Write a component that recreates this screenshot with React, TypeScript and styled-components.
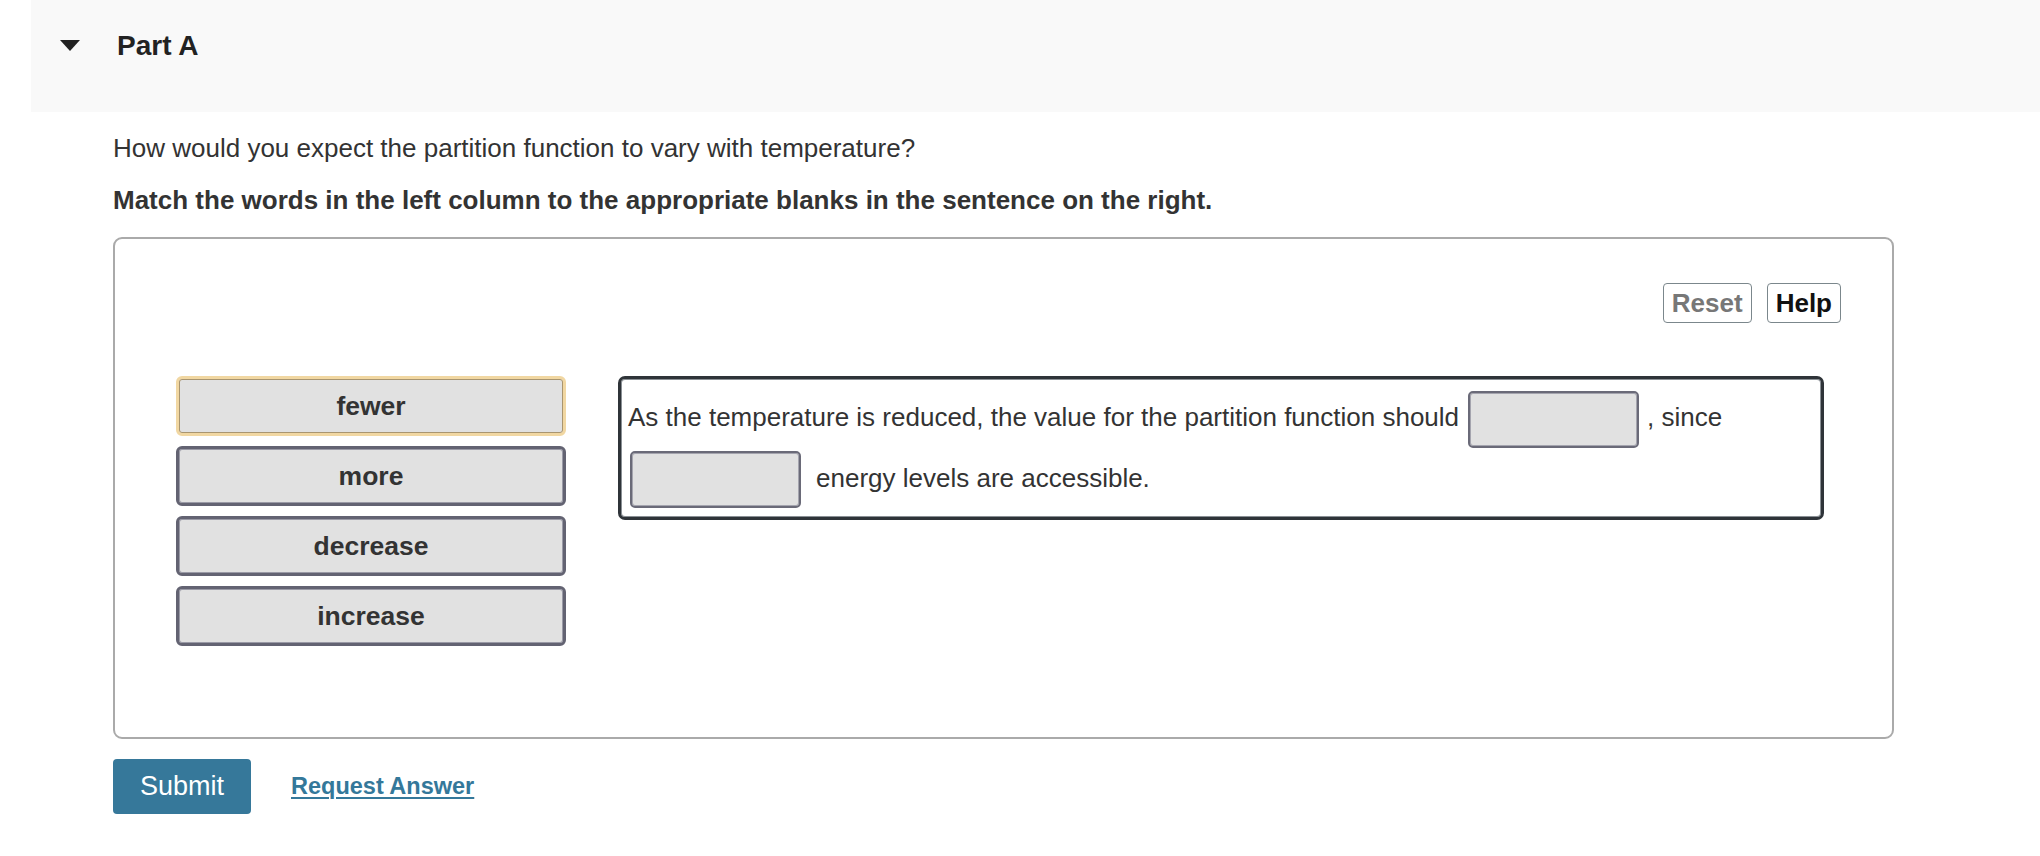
import React from "react";
import styled, { createGlobalStyle } from "styled-components";

const GlobalStyle = createGlobalStyle`
  html, body {
    margin: 0;
    padding: 0;
    background: #ffffff;
  }
  body {
    font-family: "Liberation Sans", Arial, Helvetica, sans-serif;
    color: #333333;
  }
  * { box-sizing: border-box; }
`;

const Page = styled.div`
  padding-left: 31px;
  width: 2040px;
`;

const PartHeader = styled.div`
  height: 112px;
  background: #f9f9f9;
  display: flex;
  align-items: flex-start;
  padding: 29px 0 0 29px;
  gap: 37px;
`;

const Caret = styled.svg`
  width: 20px;
  height: 11px;
  margin-top: 11px;
  flex: none;
`;

const PartTitle = styled.h2`
  margin: 0;
  font-size: 28px;
  line-height: 1.2;
  font-weight: 700;
  color: #222222;
`;

const Content = styled.div`
  margin-left: 82px;
  width: 1781px;
  display: flex;
  flex-direction: column;
`;

const Question = styled.p`
  margin: 20px 0 0;
  font-size: 26px;
  line-height: 32px;
  color: #333333;
`;

const Instruction = styled.p`
  margin: 20px 0 0;
  font-size: 26px;
  line-height: 32px;
  font-weight: 700;
  color: #333333;
`;

const Board = styled.div`
  margin-top: 21px;
  border: 2px solid #aaaaaa;
  border-radius: 9px;
  padding: 44px 51px 91px 61px;
  display: flex;
  flex-direction: column;
`;

const Toolbar = styled.div`
  display: flex;
  justify-content: flex-end;
  gap: 15px;
`;

const ToolButton = styled.button<{ $muted?: boolean }>`
  font-family: "Liberation Sans", Arial, Helvetica, sans-serif;
  font-size: 26px;
  font-weight: 700;
  height: 40px;
  padding: 0 8px;
  background: #ffffff;
  border: 1.5px solid #7b878c;
  border-radius: 4px;
  color: ${(p) => (p.$muted ? "#777777" : "#111111")};
  line-height: 1;
`;

const Workspace = styled.div`
  margin-top: 53px;
  display: flex;
  align-items: flex-start;
  gap: 52px;
`;

const WordColumn = styled.div`
  display: flex;
  flex-direction: column;
  gap: 10px;
  width: 390px;
  flex: none;
`;

const WordTile = styled.div<{ $selected?: boolean }>`
  height: 60px;
  display: flex;
  align-items: center;
  justify-content: center;
  background: #e1e1e1;
  border-radius: 6px;
  border: 3px solid ${(p) => (p.$selected ? "#f1d7a2" : "#636372")};
  box-shadow: inset 0 0 0 1px ${(p) => (p.$selected ? "#a99570" : "#9a9aa6")};
  font-size: 26.5px;
  font-weight: 700;
  color: #333333;
`;

const SentenceBox = styled.div`
  width: 1206px;
  border: 3px solid #2f3439;
  box-shadow: inset 0 0 0 1px #8a9095;
  border-radius: 7px;
  padding: 8px 8px 9px 7px;
  font-size: 26px;
  line-height: 60px;
  color: #333333;
`;

const Blank = styled.span`
  display: inline-block;
  vertical-align: middle;
  width: 171px;
  height: 57px;
  margin: 0 8px 0 9px;
  background: #e1e1e1;
  border: 2px solid #6a6a78;
  box-shadow: inset 0 0 0 1px #a4a4ae;
  border-radius: 5px;
`;

const LeadBlank = styled(Blank)`
  margin-left: 2px;
  margin-right: 15px;
`;

const Actions = styled.div`
  margin-top: 20px;
  display: flex;
  align-items: center;
  gap: 40px;
`;

const SubmitButton = styled.button`
  font-family: "Liberation Sans", Arial, Helvetica, sans-serif;
  height: 55px;
  width: 138px;
  background: #36789a;
  color: #ffffff;
  font-size: 27px;
  border: none;
  border-radius: 4px;
  padding: 0;
`;

const RequestLink = styled.a`
  font-size: 23.5px;
  font-weight: 700;
  color: #34789a;
  text-decoration: underline;
  text-underline-offset: 3px;
  text-decoration-thickness: 2px;
  cursor: pointer;
`;

const words = [
  { label: "fewer", selected: true },
  { label: "more" },
  { label: "decrease" },
  { label: "increase" },
];

export default function App() {
  return (
    <>
      <GlobalStyle />
      <Page>
        <PartHeader>
          <Caret viewBox="0 0 20 11" aria-hidden="true">
            <polygon points="0,0 20,0 10,11" fill="#222222" />
          </Caret>
          <PartTitle>Part A</PartTitle>
        </PartHeader>
        <Content>
          <Question>How would you expect the partition function to vary with temperature?</Question>
          <Instruction>
            Match the words in the left column to the appropriate blanks in the sentence on the right.
          </Instruction>
          <Board>
            <Toolbar>
              <ToolButton $muted>Reset</ToolButton>
              <ToolButton>Help</ToolButton>
            </Toolbar>
            <Workspace>
              <WordColumn>
                {words.map((w) => (
                  <WordTile key={w.label} $selected={w.selected}>
                    {w.label}
                  </WordTile>
                ))}
              </WordColumn>
              <SentenceBox>
                As the temperature is reduced, the value for the partition function should
                <Blank />, since <LeadBlank />
                energy levels are accessible.
              </SentenceBox>
            </Workspace>
          </Board>
          <Actions>
            <SubmitButton>Submit</SubmitButton>
            <RequestLink>Request Answer</RequestLink>
          </Actions>
        </Content>
      </Page>
    </>
  );
}
